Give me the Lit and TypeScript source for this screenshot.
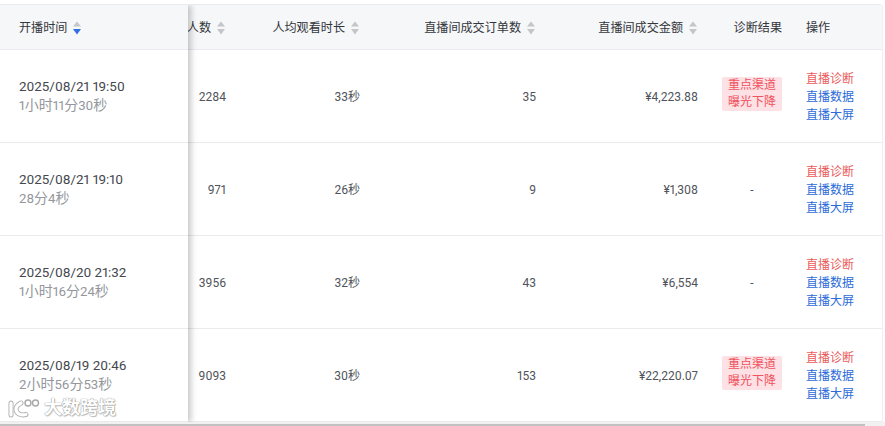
import { LitElement, html, css } from "lit";
import { customElement } from "lit/decorators.js";

interface Row {
  date: string;
  dur: string;
  people: string;
  watch: string;
  orders: string;
  amount: string;
  tag: boolean;
}

const ROWS: Row[] = [
  { date: "2025/08/21 19:50", dur: "1小时11分30秒", people: "2284", watch: "33秒", orders: "35", amount: "¥4,223.88", tag: true },
  { date: "2025/08/21 19:10", dur: "28分4秒", people: "971", watch: "26秒", orders: "9", amount: "¥1,308", tag: false },
  { date: "2025/08/20 21:32", dur: "1小时16分24秒", people: "3956", watch: "32秒", orders: "43", amount: "¥6,554", tag: false },
  { date: "2025/08/19 20:46", dur: "2小时56分53秒", people: "9093", watch: "30秒", orders: "153", amount: "¥22,220.07", tag: true },
];

const sorter = (active = false) => html`<svg class="sort" width="10" height="14" viewBox="0 0 10 14">
  <path d="M5 0.5 L9 5.5 H1 Z" fill="#c4c6ca"></path>
  <path d="M1 8 H9 L5 13.5 Z" fill=${active ? "#2f6fe4" : "#c4c6ca"}></path>
</svg>`;

const durText = (s: string) =>
  s.split(/(\d+)/).map((p) => (/^\d+$/.test(p) ? p : html`<span class="c">${p}</span>`));

@customElement("app-root")
export class AppRoot extends LitElement {
  static styles = css`
    :host {
      display: block;
      width: 885px;
      height: 426px;
      overflow: hidden;
      background: #fff;
      font-family: "Roboto", "Noto Sans CJK SC", sans-serif;
      color: #3f4248;
      font-size: 12px;
      position: relative;
      font-variant-numeric: proportional-nums;
    }
    .spacer { height: 4px; }
    .card {
      width: 883px;
      height: 418px;
      box-sizing: border-box;
      border-top: 1px solid #e9ebee;
      border-right: 1px solid #eeeff1;
      border-top-right-radius: 4px;
      display: flex;
      overflow: hidden;
    }
    .fixed {
      flex: 0 0 188px;
      position: relative;
      z-index: 1;
      box-shadow: 3px 0 6px rgba(0, 0, 0, 0.22);
      background: #fff;
    }
    .scroll { flex: 1; min-width: 0; overflow: hidden; }
    .head, .row {
      display: grid;
      grid-template-columns: 38px 134px 176px 162px 84px 100px;
      border-bottom: 1px solid #e9ebee;
    }
    .head {
      height: 45px;
      box-sizing: border-box;
      background: #f6f7f9;
      color: #33363b;
      align-items: center;
    }
    .row {
      height: 93px;
      box-sizing: border-box;
      align-items: center;
    }
    .h {
      display: flex;
      justify-content: flex-end;
      align-items: center;
      gap: 5px;
      white-space: nowrap;
      overflow: hidden;
      font-size: 12.1px;
      line-height: 18px;
      padding-top: 1px;
    }
    .h.op { justify-content: flex-start; padding-left: 24px; }
    .sort { flex: none; }
    .fhead {
      height: 45px;
      box-sizing: border-box;
      background: #f6f7f9;
      border-bottom: 1px solid #e9ebee;
      display: flex;
      align-items: center;
      gap: 5px;
      padding: 1px 0 0 19px;
      color: #33363b;
      font-size: 12.1px;
      line-height: 18px;
    }
    .frow {
      height: 93px;
      box-sizing: border-box;
      border-bottom: 1px solid #e9ebee;
      padding: 0 0 0 19px;
      display: flex;
      flex-direction: column;
      justify-content: center;
    }
    .date { font-size: 13.4px; line-height: 19px; color: #44474d; }
    .dur { font-size: 13.2px; line-height: 20px; color: #94979c; }
    .dur .c { font-size: 14px; line-height: 18px; }
    .num {
      text-align: right;
      white-space: nowrap;
      color: #50535a;
      line-height: 18px;
      padding-top: 2px;
      height: 18px;
    }
    .num.watch { padding-top: 1px; }
    .diag { display: flex; justify-content: flex-end; }
    .tag {
      width: 60px;
      box-sizing: border-box;
      margin-bottom: 5px;
      background: #fde1e4;
      color: #f0525f;
      border-radius: 2px;
      line-height: 17px;
      text-align: center;
    }
    .dash { width: 60px; text-align: center; }
    .links {
      padding: 2px 0 0 24px;
      display: flex;
      flex-direction: column;
      line-height: 18px;
      color: #2c6bd9;
    }
    .links .red { color: #ea5b5b; }
    .track {
      position: absolute;
      left: 0;
      right: 0;
      bottom: 0;
      height: 4px;
      background: #f1f1f1;
    }
    .thumb {
      position: absolute;
      left: 0;
      bottom: 0;
      width: 865px;
      height: 2px;
      background: #c1c1c1;
    }
    .mark {
      position: absolute;
      left: 8px;
      top: 397px;
      z-index: 2;
      display: flex;
      align-items: center;
      gap: 4px;
    }
    .mark span {
      font-size: 18px;
      color: #fff;
      font-weight: 700;
      text-shadow: 0 0 1px #8f8f8f, 0 0 1px #a5a5a5, 1px 1px 1px #c5c5c5;
      line-height: 22px;
    }
  `;

  render() {
    return html`
      <div class="spacer"></div>
      <div class="card">
        <div class="fixed">
          <div class="fhead"><span>开播时间</span>${sorter(true)}</div>
          ${ROWS.map(
            (r) => html`<div class="frow">
              <div class="date">${r.date}</div>
              <div class="dur">${durText(r.dur)}</div>
            </div>`
          )}
        </div>
        <div class="scroll">
          <div class="head">
            <div class="h"><span>观看人数</span>${sorter()}</div>
            <div class="h"><span>人均观看时长</span>${sorter()}</div>
            <div class="h"><span>直播间成交订单数</span>${sorter()}</div>
            <div class="h"><span>直播间成交金额</span>${sorter()}</div>
            <div class="h"><span>诊断结果</span></div>
            <div class="h op"><span>操作</span></div>
          </div>
          ${ROWS.map(
            (r) => html`<div class="row">
              <div class="num">${r.people}</div>
              <div class="num watch">${r.watch}</div>
              <div class="num">${r.orders}</div>
              <div class="num">${r.amount}</div>
              <div class="diag">
                ${r.tag
                  ? html`<div class="tag">重点渠道<br />曝光下降</div>`
                  : html`<div class="num dash">-</div>`}
              </div>
              <div class="links">
                <span class="red">直播诊断</span>
                <span>直播数据</span>
                <span>直播大屏</span>
              </div>
            </div>`
          )}
        </div>
      </div>
      <div class="track"></div>
      <div class="thumb"></div>
      <div class="mark">
        <svg width="32" height="22" viewBox="0 0 32 22" fill="none" stroke-linecap="round">
          <g stroke="#b0b0b0" stroke-width="5">
            <path d="M3 6 V18"></path>
            <path d="M13 6 C9.5 8 8 10 8 12 C8 16 12 19 18 17.5"></path>
          </g>
          <g stroke="#fff" stroke-width="3.2">
            <path d="M3 6 V18"></path>
            <path d="M13 6 C9.5 8 8 10 8 12 C8 16 12 19 18 17.5"></path>
          </g>
          <circle cx="20" cy="6" r="3" stroke="#a8a8a8" stroke-width="1.4"></circle>
          <circle cx="27.5" cy="6" r="3" stroke="#a8a8a8" stroke-width="1.4"></circle>
        </svg>
        <span>大数跨境</span>
      </div>
    `;
  }
}
